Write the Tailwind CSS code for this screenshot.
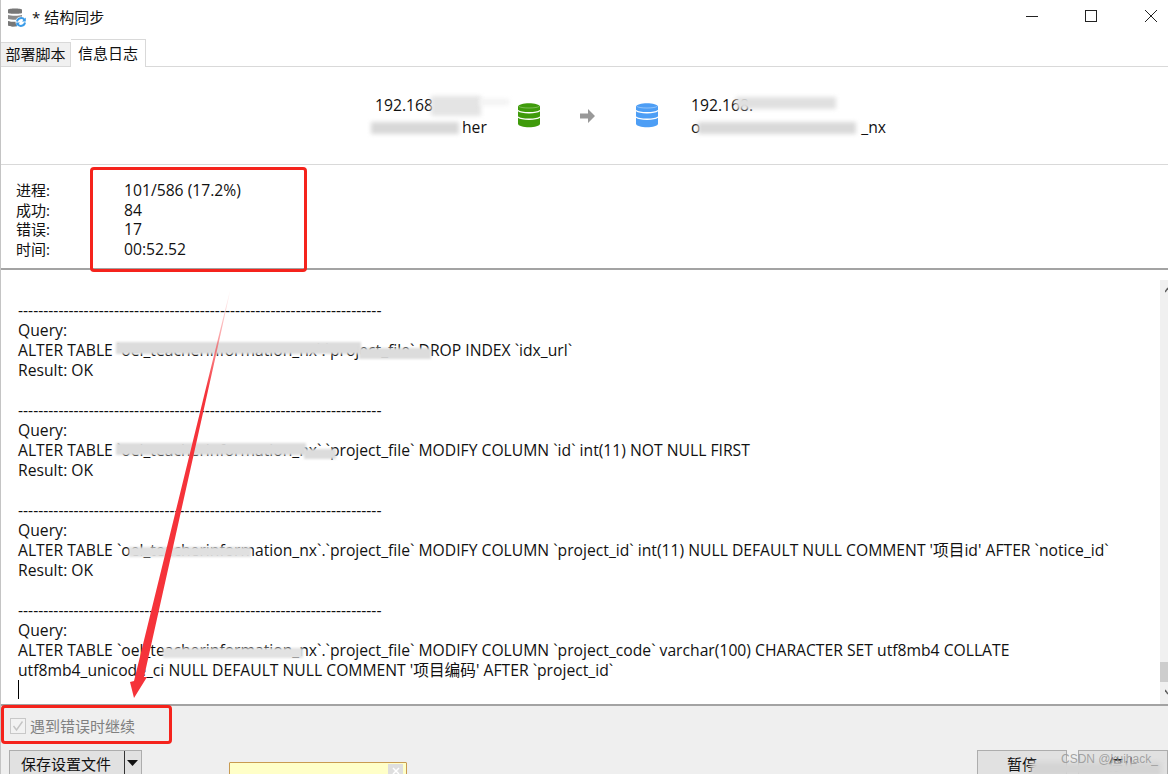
<!DOCTYPE html>
<html lang="zh">
<head>
<meta charset="utf-8">
<script src="https://cdn.jsdelivr.net/npm/@tailwindcss/browser@4"></script>
</head>
<body class="m-0 bg-white">
<div class="relative flex flex-col w-[1168px] h-[774px] overflow-hidden bg-white border-l-[1px] border-[#c4c4c4] text-[15.7px] leading-[20px] text-[#111] font-['Open_Sans','Noto_Sans_CJK_SC',sans-serif]">
  <!-- title bar -->
  <div class="flex items-start h-[39px] shrink-0 pl-[6px] pt-[7px]">
    <svg width="20" height="21" viewBox="0 0 20 21" class="shrink-0">
      <path d="M1 2.500C1 1 15 1 15 2.500V6C15 7 1 7 1 6Z" fill="#777"/>
      <path d="M1 8C4 9 12 9 15 8V12C12 13 4 13 1 12Z" fill="#8a8a8a"/>
      <path d="M1 14C4 15 9 15 11 14.500V19C7 20 3 20 1 18.500Z" fill="#777"/>
      <circle cx="14" cy="15" r="5.500" fill="#fff"/>
      <path d="M10 14.500A4.200 4.200 0 0 1 17.500 12.800M18 15.500A4.200 4.200 0 0 1 10.500 17.200" fill="none" stroke="#3a9be8" stroke-width="2"/>
      <path d="M18.800 10.500V14.500H15ZM9.200 19.500V15.500H13Z" fill="#3a9be8"/>
    </svg>
    <span class="ml-[5px] text-[15px]">* 结构同步</span>
    <div class="ml-auto flex items-center pt-[2px]">
      <svg width="14" height="14" viewBox="0 0 14 14" class="mr-[45px]"><path d="M1 7.500H13" stroke="#222" stroke-width="1" fill="none"/></svg>
      <svg width="14" height="14" viewBox="0 0 14 14" class="mr-[46px]"><rect x="1.500" y="1.500" width="11" height="11" fill="none" stroke="#222"/></svg>
      <svg width="14" height="14" viewBox="0 0 14 14" class="mr-[10px]"><path d="M1 1L13 13M13 1L1 13" stroke="#222" stroke-width="1" fill="none"/></svg>
    </div>
  </div>
  <!-- tabs -->
  <div class="flex items-end h-[28px] shrink-0 border-b border-[#d9d9d9] text-[15px]">
    <div class="flex items-center justify-center w-[70px] h-[24px] pb-[2px] bg-[#f0f0f0] border-r border-[#d9d9d9] border-t">部署脚本</div>
    <div class="flex items-center justify-center w-[75px] h-[28px] pb-[1px] -mb-[1px] bg-white border border-b-0 border-l-0 border-[#d9d9d9]">信息日志</div>
  </div>
  <!-- connection header -->
  <div class="relative flex items-center h-[98px] shrink-0 border-b border-[#d9d9d9]">
    <div class="w-[374px] shrink-0"></div>
    <div class="w-[131px] shrink-0 pt-[2px]">
      <div>192.168</div>
      <div class="pl-[87px] leading-[24px]">her</div>
    </div>
    <svg width="22" height="25" viewBox="0 0 22 25" class="shrink-0 ml-[12px]">
      <path d="M0 4C0 -1 22 -1 22 4V20.500C22 25.500 0 25.500 0 20.500Z" fill="#3f9b0b"/>
      <path d="M0 7.500C3 10.500 19 10.500 22 7.500M0 14C3 17 19 17 22 14" fill="none" stroke="#fff" stroke-width="1.300"/>
      <path d="M1 3.500C4 5.500 18 5.500 21 3.500" fill="none" stroke="#8cc56a" stroke-width="0.800"/>
    </svg>
    <svg width="16" height="16" viewBox="0 0 16 16" class="shrink-0 ml-[40px]"><path d="M0 5.500H8V1L15 8L8 15V10.500H0Z" fill="#999"/></svg>
    <svg width="22" height="25" viewBox="0 0 22 25" class="shrink-0 ml-[40px]">
      <path d="M0 4C0 -1 22 -1 22 4V20.500C22 25.500 0 25.500 0 20.500Z" fill="#4d9ef5"/>
      <path d="M0 7.500C3 10.500 19 10.500 22 7.500M0 14C3 17 19 17 22 14" fill="none" stroke="#fff" stroke-width="1.300"/>
      <path d="M1 3.500C4 5.500 18 5.500 21 3.500" fill="none" stroke="#a5cdfa" stroke-width="0.800"/>
    </svg>
    <div class="ml-[33px] pt-[2px]">
      <div>192.168.</div>
      <div class="flex w-[195px] justify-between leading-[24px]"><span>o</span><span>_nx</span></div>
    </div>
  </div>
  <!-- stats -->
  <div class="grid grid-cols-[108px_1fr] auto-rows-[19.600px] content-start h-[105px] shrink-0 pt-[16px] pl-[15px] leading-[19.600px] border-b-2 border-[#a3a3a3]">
    <div class="text-[15px]">进程:</div><div>101/586 (17.2%)</div>
    <div class="text-[15px]">成功:</div><div>84</div>
    <div class="text-[15px]">错误:</div><div>17</div>
    <div class="text-[15px]">时间:</div><div>00:52.52</div>
  </div>
  <!-- log -->
  <div class="relative flex h-[434px] shrink-0 overflow-hidden">
    <div class="flex-1 pt-[30px] pl-[17px] pr-[40px]">
      <div>------------------------------------------------------------------------</div>
      <div>Query:</div>
      <div>ALTER TABLE `oel_teacherinformation_nx`.`project_file` DROP INDEX `idx_url`</div>
      <div>Result: OK</div>
      <div class="h-[20px]"></div>
      <div>------------------------------------------------------------------------</div>
      <div>Query:</div>
      <div>ALTER TABLE `oel_teacherinformation_nx`.`project_file` MODIFY COLUMN `id` int(11) NOT NULL FIRST</div>
      <div>Result: OK</div>
      <div class="h-[20px]"></div>
      <div>------------------------------------------------------------------------</div>
      <div>Query:</div>
      <div>ALTER TABLE `oel_teacherinformation_nx`.`project_file` MODIFY COLUMN `project_id` int(11) NULL DEFAULT NULL COMMENT '项目id' AFTER `notice_id`</div>
      <div>Result: OK</div>
      <div class="h-[20px]"></div>
      <div>------------------------------------------------------------------------</div>
      <div>Query:</div>
      <div>ALTER TABLE `oel_teacherinformation_nx`.`project_file` MODIFY COLUMN `project_code` varchar(100) CHARACTER SET utf8mb4 COLLATE utf8mb4_unicode_ci NULL DEFAULT NULL COMMENT '项目编码' AFTER `project_id`</div>
      <div class="w-px h-[19px] bg-black"></div>
    </div>
    <div class="flex flex-col items-end w-[8px] mt-[10px] shrink-0 bg-[#f0f0f0]">
      <svg width="3" height="6" viewBox="0 0 3 6" class="mt-[7px] shrink-0"><path d="M0 5L3 1" stroke="#606060" stroke-width="1.500" fill="none"/></svg>
      <div class="w-full h-[369px] shrink-0"></div>
      <div class="w-full h-[20px] shrink-0 bg-[#cdcdcd]"></div>
      <svg width="3" height="6" viewBox="0 0 3 6" class="mt-[7px] shrink-0"><path d="M0 1L3 5" stroke="#606060" stroke-width="1.500" fill="none"/></svg>
    </div>
  </div>
  <!-- footer -->
  <div class="relative flex-1 bg-[#efefef] border-t-2 border-[#a3a3a3] text-[15px]">
    <div class="flex items-center h-[43px] pb-[3px] pl-[9px] text-[#808080]">
      <span class="flex items-center justify-center w-[16px] h-[16px] border border-[#c8c8c8] bg-[#f2f2f2]">
        <svg width="12" height="12" viewBox="0 0 12 12"><path d="M1.500 6L4.500 10L10.500 1.500" fill="none" stroke="#c4c4c4" stroke-width="1.400"/></svg>
      </span>
      <span class="ml-[4px]">遇到错误时继续</span>
    </div>
    <div class="flex items-start mt-[1px]">
      <div class="flex h-[30px] w-[133px] ml-[8px] border border-[#adadad] bg-[#e1e1e1]">
        <span class="flex-1 pl-[11px] pt-[3px] whitespace-nowrap">保存设置文件</span>
        <span class="flex items-center justify-center w-[17px] h-[24px] border-l border-[#333]">
          <svg width="12" height="7" viewBox="0 0 12 7"><path d="M0 0H11L5.500 6Z" fill="#111"/></svg>
        </span>
      </div>
      <div class="relative w-[178px] h-[20px] ml-[87px] mt-[12px] bg-[#ffffc8] border border-[#c89b50] rounded-[1px]">
        <span class="absolute right-[3px] top-[1px] flex items-center justify-center w-[15px] h-[14px] bg-[#dedede]">
          <svg width="8" height="8" viewBox="0 0 8 8"><path d="M1 1L7 7M7 1L1 7" stroke="#fff" stroke-width="1.500" fill="none"/></svg>
        </span>
      </div>
      <div class="flex justify-center w-[90px] h-[30px] ml-[570px] border border-[#adadad] bg-[#e1e1e1] pt-[3px]">暂停</div>
      <div class="flex justify-center w-[90px] h-[30px] ml-[11px] border border-[#adadad] bg-[#e1e1e1] pt-[3px]">停止</div>
    </div>
  </div>

  <!-- privacy smudges laid over the text -->
  <div class="absolute left-[430px] top-[96px] w-[50px] h-[20px] bg-[#e4e4e4] blur-[2px]"></div>
  <div class="absolute left-[478px] top-[99px] w-[30px] h-[6px] bg-[#f2f2f2] blur-[2px]"></div>
  <div class="absolute left-[370px] top-[122px] w-[88px] h-[12px] bg-[#d8d8d8] blur-[2px]"></div>
  <div class="absolute left-[735px] top-[97px] w-[100px] h-[12px] bg-[#e0e0e0] blur-[2px]"></div>
  <div class="absolute left-[697px] top-[122px] w-[158px] h-[12px] bg-[#d9d9d9] blur-[2px]"></div>
  <div class="absolute left-[115px] top-[342px] w-[245px] h-[12px] bg-[#dcdcdc] blur-[1px]"></div>
  <div class="absolute left-[358px] top-[348px] w-[72px] h-[11px] bg-[#dcdcdc] blur-[1px]"></div>
  <div class="absolute left-[115px] top-[443px] w-[190px] h-[12px] bg-[#dcdcdc] blur-[1px]"></div>
  <div class="absolute left-[303px] top-[449px] w-[32px] h-[10px] bg-[#dcdcdc] blur-[1px]"></div>
  <div class="absolute left-[128px] top-[547px] w-[122px] h-[10px] bg-[#e0e0e0] blur-[1px]"></div>
  <div class="absolute left-[162px] top-[648px] w-[140px] h-[10px] bg-[#e2e2e2] blur-[1px]"></div>
  <div class="absolute left-[1030px] top-[762px] w-[130px] h-[14px] bg-[#d4d4d4] blur-[2px]"></div>

  <!-- red annotations -->
  <div class="absolute left-[89px] top-[167px] w-[217px] h-[105px] border-[3px] border-[#f5231c] rounded-[4px]"></div>
  <div class="absolute left-0 top-[705px] w-[171px] h-[39px] border-[3px] border-[#f5231c] rounded-[4px]"></div>
  <svg class="absolute left-[-1px] top-0 pointer-events-none" width="1168" height="774" viewBox="0 0 1168 774">
    <defs>
      <linearGradient id="fade" x1="230" y1="290" x2="140" y2="698" gradientUnits="userSpaceOnUse">
        <stop offset="0" stop-color="#f5333a" stop-opacity="0"/>
        <stop offset="0.250" stop-color="#f5333a"/>
      </linearGradient>
    </defs>
    <path d="M230.500 290L144 677L147 677L134 698L130 682L134 681L230 290Z" fill="url(#fade)"/>
  </svg>
  <!-- watermark -->
  <div class="absolute left-[1060px] top-[751px] text-[12px] leading-[16px] text-[#9a9a9a]/90 font-['Liberation_Sans',sans-serif]">CSDN @kuihack_</div>
</div>
</body>
</html>
